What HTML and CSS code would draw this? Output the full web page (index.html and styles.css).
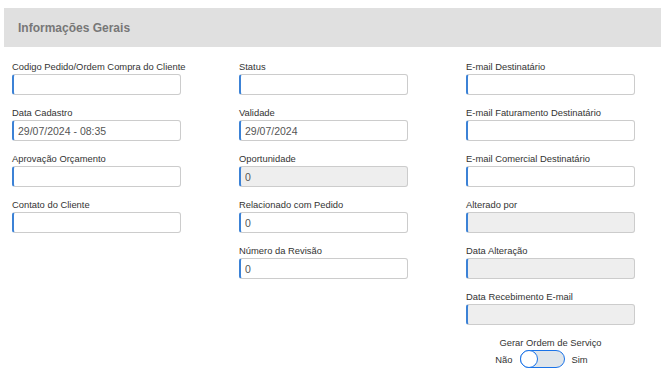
FILE: index.html
```html
<!DOCTYPE html>
<html lang="pt-BR">
<head>
    <meta charset="UTF-8">
    <meta name="viewport" content="width=device-width, initial-scale=1.0">
    <title>Informações Gerais</title>
    <link rel="stylesheet" href="styles.css">
</head>
<body>

    <section class="panel">
        <header class="panel-heading">
            <h2>Informações Gerais</h2>
        </header>

        <div class="form-row">
            <div class="form-col">
                <div class="field">
                    <label>Codigo Pedido/Ordem Compra do Cliente</label>
                    <input type="text" class="form-control">
                </div>
                <div class="field">
                    <label>Data Cadastro</label>
                    <input type="text" class="form-control" value="29/07/2024 - 08:35">
                </div>
                <div class="field">
                    <label>Aprovação Orçamento</label>
                    <input type="text" class="form-control">
                </div>
                <div class="field">
                    <label>Contato do Cliente</label>
                    <input type="text" class="form-control">
                </div>
            </div>

            <div class="form-col">
                <div class="field">
                    <label>Status</label>
                    <input type="text" class="form-control">
                </div>
                <div class="field">
                    <label>Validade</label>
                    <input type="text" class="form-control" value="29/07/2024">
                </div>
                <div class="field">
                    <label>Oportunidade</label>
                    <input type="text" class="form-control" value="0" disabled>
                </div>
                <div class="field">
                    <label>Relacionado com Pedido</label>
                    <input type="text" class="form-control" value="0">
                </div>
                <div class="field">
                    <label>Número da Revisão</label>
                    <input type="text" class="form-control" value="0">
                </div>
            </div>

            <div class="form-col">
                <div class="field">
                    <label>E-mail Destinatário</label>
                    <input type="text" class="form-control">
                </div>
                <div class="field">
                    <label>E-mail Faturamento Destinatário</label>
                    <input type="text" class="form-control">
                </div>
                <div class="field">
                    <label>E-mail Comercial Destinatário</label>
                    <input type="text" class="form-control">
                </div>
                <div class="field">
                    <label>Alterado por</label>
                    <input type="text" class="form-control" disabled>
                </div>
                <div class="field">
                    <label>Data Alteração</label>
                    <input type="text" class="form-control" disabled>
                </div>
                <div class="field">
                    <label>Data Recebimento E-mail</label>
                    <input type="text" class="form-control" disabled>
                </div>

                <div class="toggle-group">
                    <span class="toggle-title">Gerar Ordem de Serviço</span>
                    <div class="toggle-row">
                        <span>Não</span>
                        <span class="switch"><span class="knob"></span></span>
                        <span>Sim</span>
                    </div>
                </div>
            </div>
        </div>
    </section>

</body>
</html>
```

FILE: styles.css
```css
body {
    margin: 0;
    background-color: #fff;
    color: #333;
    font-family: 'Liberation Sans', Arial, sans-serif;
    overflow: hidden;
}

/* Panel */
.panel {
    padding: 8px 0 0 4px;
}

.panel-heading {
    background-color: #e0e0e0;
    height: 39px;
    display: flex;
    align-items: center;
    padding-left: 14px;
}

.panel-heading h2 {
    margin: 0;
    font-size: 12px;
    font-weight: bold;
    color: #777;
}

/* Form columns */
.form-row {
    display: flex;
    padding-top: 14px;
}

.form-col {
    flex: 0 0 227px;
    padding-left: 8px;
    box-sizing: border-box;
}

.field {
    margin-bottom: 12px;
}

.field label {
    display: block;
    font-size: 9.4px;
    line-height: 12px;
    margin-bottom: 1px;
    color: #333;
}

.form-control {
    display: block;
    width: 169px;
    height: 21px;
    box-sizing: border-box;
    margin: 0;
    padding: 0 4px;
    border: 1px solid #ccc;
    border-left: 2px solid #3c82d6;
    border-radius: 3px;
    background-color: #fff;
    font-family: 'Liberation Sans', Arial, sans-serif;
    font-size: 10.5px;
    color: #555;
    outline: none;
}

.form-control:disabled {
    background-color: #eee;
    color: #555;
}

/* Toggle */
.toggle-group {
    width: 169px;
    display: flex;
    flex-direction: column;
    align-items: center;
    font-size: 9.4px;
    color: #333;
}

.toggle-title {
    line-height: 12px;
}

.toggle-row {
    display: flex;
    align-items: center;
    gap: 7px;
    margin-top: 1px;
    margin-right: 18px;
}

.switch {
    display: block;
    width: 45px;
    height: 18px;
    box-sizing: border-box;
    border: 1px solid #1a73e8;
    border-radius: 9px;
    background-color: #dfe5ea;
    position: relative;
}

.knob {
    position: absolute;
    left: -1px;
    top: -1px;
    width: 18px;
    height: 18px;
    box-sizing: border-box;
    border: 1px solid #1a73e8;
    border-radius: 50%;
    background-color: #fff;
}
```
